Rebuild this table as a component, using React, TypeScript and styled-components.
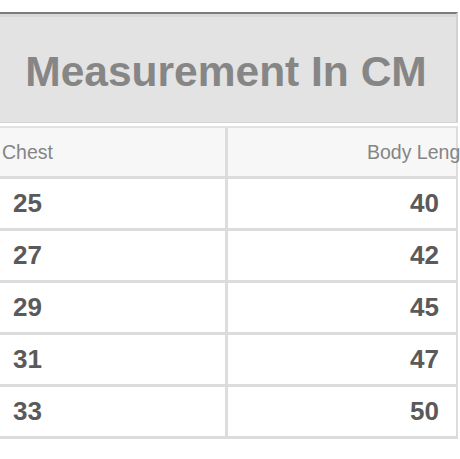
import React from "react";
import styled, { createGlobalStyle } from "styled-components";

const Global = createGlobalStyle`
  html, body { margin: 0; padding: 0; background: #ffffff; overflow: hidden; }
  body { font-family: "Liberation Sans", Arial, Helvetica, sans-serif; }
`;

const Page = styled.div`
  width: 460px;
  height: 459px;
  padding-top: 12px;
  box-sizing: border-box;
  overflow: hidden;
`;

const TitleBox = styled.div`
  width: 458px;
  border-top: 2px solid #7c7c7c;
  background: #e3e3e3;
  box-sizing: border-box;
  border-bottom: 1px solid #d4d4d4;
  border-right: 2px solid #d2d2d2;
`;

const TitleInner = styled.div`
  border-top: 3px solid #d8d8d8;
  height: 108px;
  display: flex;
  align-items: center;
  justify-content: center;
  padding: 5px 4px 0 0;
  box-sizing: border-box;
`;

const Title = styled.h1`
  margin: 0;
  font-size: 42.5px;
  font-weight: 700;
  color: #868686;
  white-space: nowrap;
`;

const Table = styled.div`
  margin-top: 3px;
  width: 458px;
  border-top: 2px solid #e2e2e2;
  border-right: 2px solid #dcdcdc;
  box-sizing: border-box;
`;

const Row = styled.div<{ $head?: boolean; $h: number }>`
  display: grid;
  grid-template-columns: 228px 1fr;
  height: ${(p) => p.$h}px;
  border-bottom: 3px solid #dcdcdc;
  background: ${(p) => (p.$head ? "#f7f7f7" : "#ffffff")};
`;

const Cell = styled.div<{ $side: "left" | "right"; $head?: boolean }>`
  display: flex;
  align-items: center;
  white-space: nowrap;
  border-right: ${(p) => (p.$side === "left" ? "3px solid #dddddd" : "none")};
  justify-content: ${(p) =>
    p.$side === "right" && !p.$head ? "flex-end" : "flex-start"};
  padding-left: ${(p) =>
    p.$head ? (p.$side === "left" ? "2px" : "139px") : p.$side === "left" ? "13px" : "0"};
  padding-right: ${(p) => (p.$side === "right" && !p.$head ? "17px" : "0")};
  font-size: ${(p) => (p.$head ? "19.5px" : "26px")};
  font-weight: ${(p) => (p.$head ? 400 : 700)};
  color: ${(p) => (p.$head ? "#858585" : "#5a5a5a")};
`;

const rows: [string, string][] = [
  ["25", "40"],
  ["27", "42"],
  ["29", "45"],
  ["31", "47"],
  ["33", "50"],
];

export default function App() {
  return (
    <>
      <Global />
      <Page>
        <TitleBox>
          <TitleInner>
            <Title>Measurement In CM</Title>
          </TitleInner>
        </TitleBox>
        <Table>
          <Row $head $h={48}>
            <Cell $side="left" $head>
              Chest
            </Cell>
            <Cell $side="right" $head>
              Body Length
            </Cell>
          </Row>
          {rows.map(([a, b]) => (
            <Row key={a} $h={49}>
              <Cell $side="left">{a}</Cell>
              <Cell $side="right">{b}</Cell>
            </Row>
          ))}
        </Table>
      </Page>
    </>
  );
}
